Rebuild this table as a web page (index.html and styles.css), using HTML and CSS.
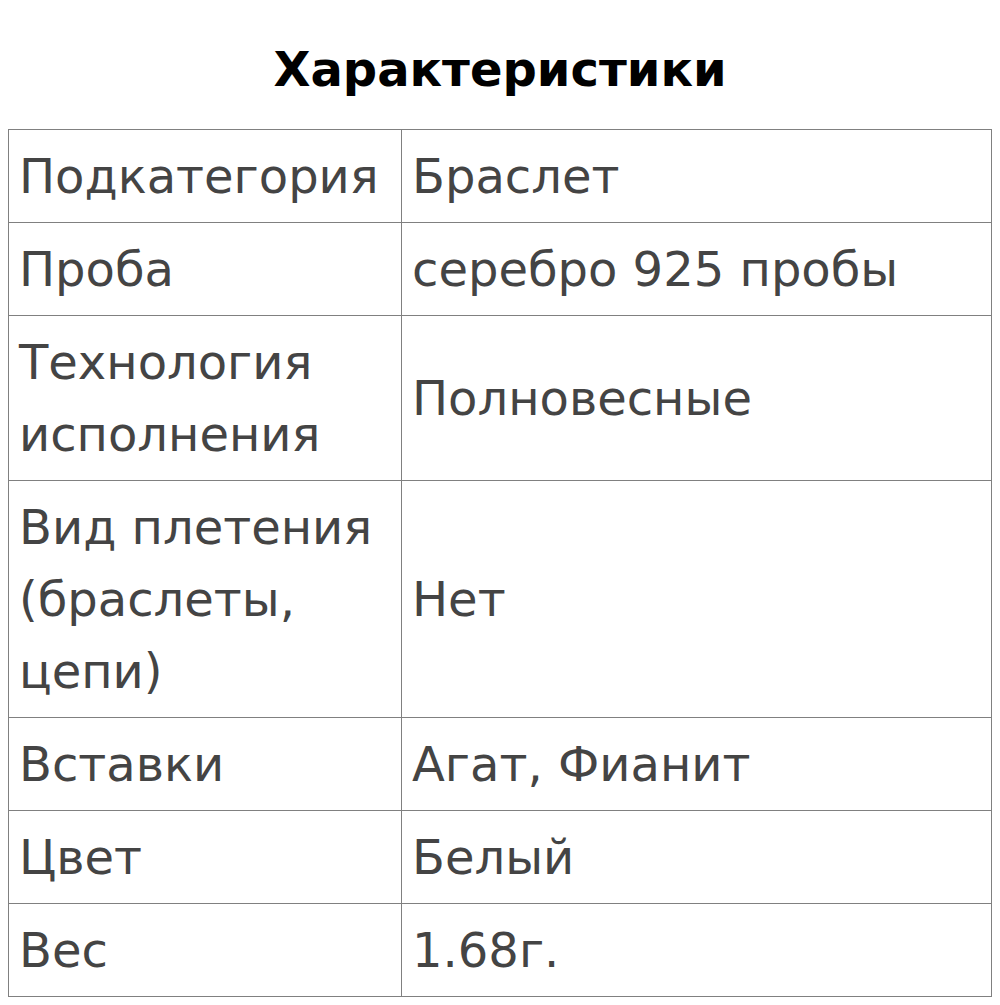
FILE: index.html
```html
<!DOCTYPE html>
<html lang="ru">
<head>
<meta charset="utf-8">
<title>Характеристики</title>
<link rel="stylesheet" href="styles.css">
</head>
<body>
<h1 class="title">Характеристики</h1>
<table class="specs">
<tbody>
<tr><td class="key">Подкатегория</td><td class="val">Браслет</td></tr>
<tr><td class="key">Проба</td><td class="val">серебро 925 пробы</td></tr>
<tr><td class="key">Технология исполнения</td><td class="val">Полновесные</td></tr>
<tr><td class="key">Вид плетения (браслеты, цепи)</td><td class="val">Нет</td></tr>
<tr><td class="key">Вставки</td><td class="val">Агат, Фианит</td></tr>
<tr><td class="key">Цвет</td><td class="val">Белый</td></tr>
<tr><td class="key">Вес</td><td class="val">1.68г.</td></tr>
</tbody>
</table>
</body>
</html>
```
FILE: styles.css
```css
html, body {
  background: #fff;
}
body {
  margin: 8px;
  font-family: "DejaVu Sans", sans-serif;
}
.title {
  margin: 33px 0 32px;
  font-size: 48px;
  font-weight: bold;
  text-align: center;
  color: #000;
  line-height: normal;
}
.specs {
  width: 100%;
  border-collapse: collapse;
  border: 1px solid #808080;
}
.specs td {
  border: 1px solid #808080;
  padding: 10px 10px;
  font-size: 48px;
  line-height: 72px;
  color: #444;
  vertical-align: middle;
  text-align: left;
}
.specs .key {
  width: 372px;
}
```
